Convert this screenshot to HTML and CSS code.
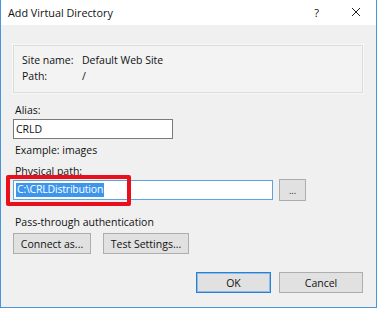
FILE: index.html
```html
<!DOCTYPE html>
<html lang="en">
<head>
    <meta charset="UTF-8">
    <title>Add Virtual Directory</title>
    <link rel="stylesheet" href="styles.css">
</head>
<body>
    <div class="window">
        <div class="titlebar">
            <span class="title">Add Virtual Directory</span>
            <span class="help">?</span>
            <svg class="close" width="10" height="10" viewBox="0 0 10 10">
                <path d="M1 1 L9 9 M9 1 L1 9" stroke="#222" stroke-width="1" fill="none"/>
            </svg>
        </div>

        <div class="body">
            <div class="groupbox">
                <span>Site name:</span><span>Default Web Site</span>
                <span>Path:</span><span>/</span>
            </div>

            <div class="label label-alias">Alias:</div>
            <div class="textbox textbox-alias">CRLD</div>
            <div class="hint">Example: images</div>

            <div class="label label-path">Physical path:</div>
            <div class="path-row">
                <div class="textbox textbox-path focused">
                    <span class="selected">C:\CRLDistribution</span>
                </div>
                <button class="btn btn-browse">...</button>
                <div class="highlight-box"></div>
            </div>

            <div class="label label-auth">Pass-through authentication</div>
            <div class="auth-buttons">
                <button class="btn btn-connect">Connect as...</button>
                <button class="btn btn-test">Test Settings...</button>
            </div>

            <div class="footer">
                <button class="btn btn-ok">OK</button>
                <button class="btn btn-cancel">Cancel</button>
            </div>
        </div>
    </div>
</body>
</html>
```

FILE: styles.css
```css
body {
    margin: 0;
    background: #ffffff;
    font-family: "Open Sans", "Noto Sans", sans-serif;
    font-size: 10.5px;
    color: #111;
}

.window {
    width: 375px;
    height: 307px;
    border: 1px solid #4a94d8;
    border-top: none;
    background: #f0f0f0;
    display: flex;
    flex-direction: column;
}

.titlebar {
    height: 25px;
    background: #ffffff;
    display: flex;
    align-items: center;
    padding-left: 7px;
}

.title {
    flex: 1;
    font-size: 10.8px;
    margin-top: -1px;
}

.help {
    font-size: 11px;
    margin-right: 32px;
    margin-top: -1px;
}

.close {
    margin-right: 15px;
    margin-top: -1px;
}

.body {
    flex: 1;
    padding: 20px 12px 0 12px;
    display: flex;
    flex-direction: column;
    align-items: flex-start;
}

.groupbox {
    box-sizing: border-box;
    width: 350px;
    height: 48px;
    border: 1px solid #dcdcdc;
    box-shadow: 0 0 0 1px #f8f8f8;
    background: #f3f3f3;
    padding: 6px 8px 0 8px;
    display: grid;
    grid-template-columns: 60px 1fr;
    line-height: 16px;
    align-content: start;
}

.label,
.hint {
    line-height: 16px;
    padding-left: 2px;
}

.label-alias {
    margin-top: 9px;
}

.label-path {
    margin-top: 5px;
}

.label-auth {
    margin-top: 13px;
}

.textbox {
    box-sizing: border-box;
    height: 20px;
    background: #ffffff;
    border: 1px solid #7a7a7a;
    padding: 0 2px;
    display: flex;
    align-items: center;
}

.textbox-alias {
    width: 160px;
    margin-top: 1px;
}

.hint {
    margin-top: 3px;
}

.path-row {
    position: relative;
    display: flex;
    align-items: center;
    gap: 6px;
}

.textbox-path {
    width: 260px;
}

.textbox.focused {
    border-color: #5ea2e2;
}

.selected {
    background: #3d95ec;
    color: #ffffff;
    padding: 0 1px 1px 1px;
    line-height: 13px;
    letter-spacing: -0.2px;
}

.highlight-box {
    position: absolute;
    left: -7px;
    top: -4px;
    width: 117px;
    height: 23px;
    border: 4px solid #e8101c;
    border-radius: 2px;
}

.btn {
    box-sizing: border-box;
    height: 21px;
    background: #e1e1e1;
    border: 1px solid #adadad;
    font-family: inherit;
    font-size: 10.5px;
    color: #111;
    padding: 0;
}

.btn-browse {
    width: 27px;
    height: 22px;
    font-size: 9px;
}

.auth-buttons {
    display: flex;
    gap: 12px;
    margin-top: 3px;
}

.btn-connect {
    width: 78px;
}

.btn-test {
    width: 86px;
}

.footer {
    align-self: flex-end;
    display: flex;
    gap: 8px;
    margin-top: 18px;
    margin-right: 1px;
}

.btn-ok {
    width: 75px;
    border-color: #2a7fd4;
    box-shadow: inset 0 0 0 1px #8cbcea;
}

.btn-cancel {
    width: 84px;
}
```
